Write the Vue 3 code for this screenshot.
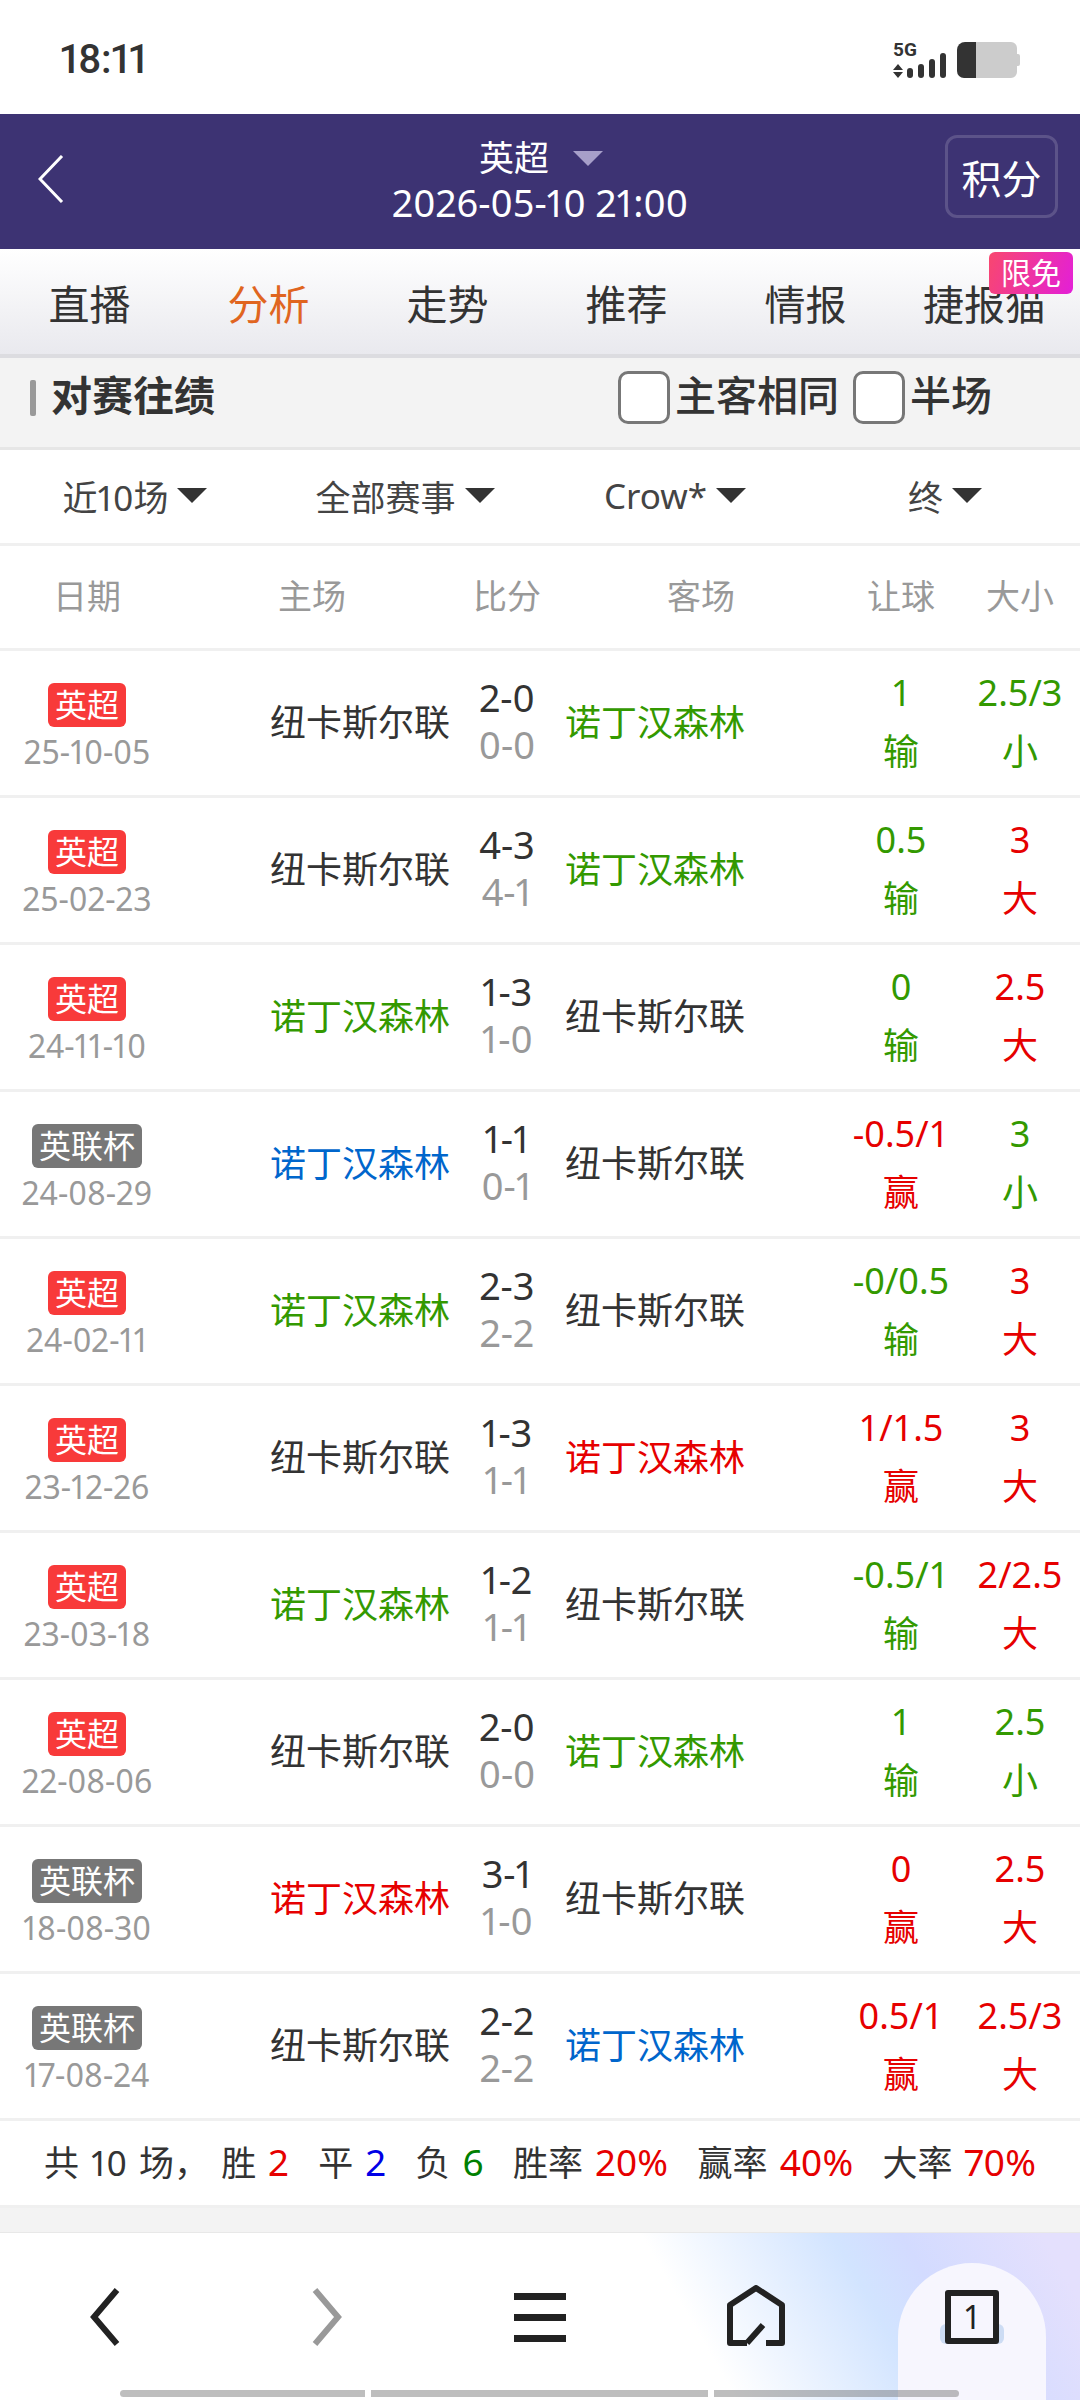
<template>
  <div class="page">
    <!-- status bar -->
    <div class="status">
      <span class="clock">18:11</span>
      <svg class="status-icons" viewBox="0 0 130 38" width="130" height="38">
        <text x="0" y="14" class="five-g">5G</text>
        <path d="M5 22l5 6H0zM5 36l5-6H0z" fill="#333" />
        <rect x="14" y="26" width="6" height="10" rx="3" fill="#333" />
        <rect x="25" y="22" width="6" height="14" rx="3" fill="#333" />
        <rect x="36" y="17" width="6" height="19" rx="3" fill="#333" />
        <rect x="47" y="11" width="6" height="25" rx="3" fill="#333" />
        <path d="M83 0h35a6 6 0 0 1 6 6v6h1a2 2 0 0 1 2 2v8a2 2 0 0 1-2 2h-1v6a6 6 0 0 1-6 6H83z" fill="#ccc" />
        <path d="M83 0v36H71a7 7 0 0 1-7-7V8a8 8 0 0 1 8-8z" fill="#333" />
      </svg>
    </div>

    <!-- match header -->
    <div class="match-head">
      <svg class="back" viewBox="0 0 26 48" width="26" height="48">
        <path d="M24 1L2 24l22 23" fill="none" stroke="#fff" stroke-width="3" />
      </svg>
      <div class="match-info">
        <div class="league">英超<i class="league-arrow"></i></div>
        <div class="kickoff">2026-05-10 21:00</div>
      </div>
      <div class="points-btn">积分</div>
    </div>

    <!-- tabs -->
    <div class="tabs">
      <div v-for="t in tabs" :key="t" class="tab" :class="{ active: t === '分析' }">{{ t }}</div>
      <span class="free-badge">限免</span>
    </div>

    <!-- section title -->
    <div class="section">
      <i class="section-bar"></i>
      <span class="section-title">对赛往绩</span>
      <div class="checks">
        <i class="check"></i><span class="check-label">主客相同</span>
        <i class="check check-second"></i><span class="check-label">半场</span>
      </div>
    </div>

    <!-- filters -->
    <div class="filters">
      <div v-for="f in filters" :key="f" class="filter">{{ f }}<i class="filter-arrow"></i></div>
    </div>

    <!-- table -->
    <div class="grid col-head">
      <span>日期</span><span>主场</span><span>比分</span><span>客场</span><span>让球</span><span>大小</span>
    </div>
    <div v-for="r in rows" :key="r.date" class="grid row">
      <div class="cell-date">
        <span class="tag" :class="{ cup: r.cup }">{{ r.cup ? '英联杯' : '英超' }}</span>
        <span class="date">{{ r.date }}</span>
      </div>
      <div class="team home" :class="r.homeColor">{{ r.home }}</div>
      <div class="score">
        <span>{{ r.ft }}</span>
        <span class="half">{{ r.ht }}</span>
      </div>
      <div class="team away" :class="r.awayColor">{{ r.away }}</div>
      <div class="odds" :class="r.hcColor">
        <span>{{ r.hc }}</span>
        <span>{{ r.hcResult }}</span>
      </div>
      <div class="odds" :class="r.ouColor">
        <span>{{ r.ou }}</span>
        <span>{{ r.ouResult }}</span>
      </div>
    </div>

    <!-- summary -->
    <div class="summary">
      <span>共 10 场， 胜 <b class="red">2</b></span>
      <span>平 <b class="blue">2</b></span>
      <span>负 <b class="dark-green">6</b></span>
      <span>胜率 <b class="red">20%</b></span>
      <span>赢率 <b class="red">40%</b></span>
      <span>大率 <b class="red">70%</b></span>
    </div>
    <div class="spacer"></div>

    <!-- browser nav -->
    <div class="nav">
      <svg viewBox="0 0 32 58" width="32" height="58" class="nav-back">
        <path d="M28 2L5 29l23 27" fill="none" stroke="#222" stroke-width="6" />
      </svg>
      <svg viewBox="0 0 32 58" width="32" height="58" class="nav-fwd">
        <path d="M4 2l23 27L4 56" fill="none" stroke="#999" stroke-width="6" />
      </svg>
      <div class="nav-menu"><i></i><i></i><i></i></div>
      <svg viewBox="0 0 60 62" width="60" height="62" class="nav-home">
        <path d="M21 58H4V20L30 3l26 17v38H40M21 58l16-18" fill="none" stroke="#222" stroke-width="6" stroke-linejoin="round" />
      </svg>
      <div class="nav-arch">
        <i class="tab-glow"></i>
        <div class="tab-count">1</div>
      </div>
      <div class="scrollbar"><i class="seg-a"></i><i class="seg-b"></i><i class="seg-c"></i></div>
    </div>
  </div>
</template>

<script setup>
const tabs = ['直播', '分析', '走势', '推荐', '情报', '捷报猫']
const filters = ['近10场', '全部赛事', 'Crow*', '终']

const NEW = '纽卡斯尔联'
const NOT = '诺丁汉森林'

function row(date, cup, home, homeColor, ft, ht, away, awayColor, hc, hcResult, ou, ouResult) {
  return {
    date, cup, home, homeColor, ft, ht, away, awayColor, hc, hcResult, ou, ouResult,
    hcColor: hcResult === '赢' ? 'red' : 'green',
    ouColor: ouResult === '大' ? 'red' : 'green',
  }
}

const rows = [
  row('25-10-05', false, NEW, '', '2-0', '0-0', NOT, 'green', '1', '输', '2.5/3', '小'),
  row('25-02-23', false, NEW, '', '4-3', '4-1', NOT, 'green', '0.5', '输', '3', '大'),
  row('24-11-10', false, NOT, 'green', '1-3', '1-0', NEW, '', '0', '输', '2.5', '大'),
  row('24-08-29', true, NOT, 'blue', '1-1', '0-1', NEW, '', '-0.5/1', '赢', '3', '小'),
  row('24-02-11', false, NOT, 'green', '2-3', '2-2', NEW, '', '-0/0.5', '输', '3', '大'),
  row('23-12-26', false, NEW, '', '1-3', '1-1', NOT, 'red', '1/1.5', '赢', '3', '大'),
  row('23-03-18', false, NOT, 'green', '1-2', '1-1', NEW, '', '-0.5/1', '输', '2/2.5', '大'),
  row('22-08-06', false, NEW, '', '2-0', '0-0', NOT, 'green', '1', '输', '2.5', '小'),
  row('18-08-30', true, NOT, 'red', '3-1', '1-0', NEW, '', '0', '赢', '2.5', '大'),
  row('17-08-24', true, NEW, '', '2-2', '2-2', NOT, 'blue', '0.5/1', '赢', '2.5/3', '大'),
]
</script>

<style scoped>
.page {
  width: 1080px;
  height: 2400px;
  overflow: hidden;
  background: #fff;
  color: #333;
  font-family: "Noto Sans", "Noto Sans CJK SC", sans-serif;
  font-variant-numeric: proportional-nums;
}

.status {
  height: 114px;
  display: flex;
  align-items: flex-start;
  justify-content: space-between;
  padding: 0 57px 0 60px;
  box-sizing: border-box;
}
.clock {
  font-family: Roboto, sans-serif;
  font-size: 40px;
  font-weight: 500;
  line-height: 47px;
  margin-top: 36px;
  letter-spacing: -0.5px;
}
.status-icons {
  margin-top: 42px;
  margin-left: auto;
  overflow: visible;
}
.five-g {
  font: 700 19px Roboto, sans-serif;
  fill: #333;
}

.match-head {
  height: 135px;
  background: #3d3373;
  position: relative;
  color: #fff;
  display: flex;
  align-items: center;
  justify-content: center;
  padding-bottom: 3px;
  box-sizing: border-box;
}
.back {
  position: absolute;
  left: 38px;
  top: 41px;
}
.match-info {
  text-align: center;
}
.league {
  font-size: 35px;
  line-height: 44px;
  transform: translateX(-26px);
  position: relative;
}
.league-arrow {
  position: absolute;
  left: calc(50% + 59px);
  top: 15px;
  border-left: 15px solid transparent;
  border-right: 15px solid transparent;
  border-top: 15px solid #a79fc9;
}
.kickoff {
  font-size: 38px;
  line-height: 44px;
}
.points-btn {
  position: absolute;
  left: 945px;
  top: 21px;
  width: 113px;
  height: 83px;
  box-sizing: border-box;
  border: 3px solid #5c5389;
  border-radius: 12px;
  font-size: 40px;
  display: flex;
  align-items: center;
  justify-content: center;
}

.tabs {
  height: 109px;
  box-sizing: border-box;
  border-bottom: 4px solid #dcdce0;
  background: linear-gradient(#fff, #e9e9ee);
  display: grid;
  grid-template-columns: repeat(6, 179px);
  position: relative;
  font-size: 41px;
}
.tab {
  display: flex;
  align-items: center;
  justify-content: center;
  white-space: nowrap;
}
.tab.active {
  color: #e0651f;
}
.free-badge {
  position: absolute;
  left: 989px;
  top: 3px;
  width: 84px;
  height: 42px;
  border-radius: 6px;
  background: linear-gradient(110deg, #f8476f, #e31fd8);
  color: #fff;
  font-size: 30px;
  line-height: 42px;
  text-align: center;
}

.section {
  height: 92px;
  box-sizing: border-box;
  border-bottom: 3px solid #e6e6e6;
  background: #f3f3f3;
  display: flex;
  align-items: center;
  padding: 0 0 10px 30px;
}
.section-bar {
  width: 6px;
  height: 36px;
  background: #999;
  margin-right: 15px;
  border-radius: 2px;
}
.section-title {
  font-size: 41px;
  font-weight: 700;
  line-height: 52px;
  margin-bottom: 6px;
}
.checks {
  margin-left: auto;
  margin-right: 88px;
  display: flex;
  align-items: center;
}
.check {
  width: 52px;
  height: 53px;
  box-sizing: border-box;
  background: #fff;
  border: 3px solid #777;
  border-radius: 10px;
  margin-right: 5px;
}
.check-second {
  margin-left: 14px;
}
.check-label {
  font-size: 41px;
  font-weight: 500;
  line-height: 52px;
  margin-bottom: 6px;
}

.filters {
  height: 96px;
  box-sizing: border-box;
  border-bottom: 3px solid #f0f0f0;
  display: grid;
  grid-template-columns: repeat(4, 270px);
  font-size: 35px;
  padding-bottom: 2px;
}
.filter {
  display: flex;
  align-items: center;
  justify-content: center;
  color: #444;
}
.filter-arrow {
  margin-left: 9px;
  border-left: 15px solid transparent;
  border-right: 15px solid transparent;
  border-top: 15px solid #333;
}

.grid {
  display: grid;
  grid-template-columns: 174px 276px 114px 274px 126px 112px;
  box-sizing: border-box;
  border-bottom: 3px solid #f0f0f0;
}
.col-head {
  height: 105px;
  align-items: center;
  text-align: center;
  font-size: 34px;
  color: #999;
  padding-bottom: 6px;
}
.row {
  height: 147px;
  align-items: center;
  text-align: center;
}

.cell-date {
  display: flex;
  flex-direction: column;
  align-items: center;
  margin-top: 8px;
}
.tag {
  height: 44px;
  line-height: 44px;
  padding: 0 7px;
  border-radius: 6px;
  background: #f83a3a;
  color: #fff;
  font-size: 32px;
}
.tag.cup {
  background: #777;
}
.date {
  font-size: 32px;
  line-height: 40px;
  margin-top: 5px;
  color: #999;
}

.team {
  font-size: 36px;
  white-space: nowrap;
  margin-top: -6px;
}
.team.home {
  text-align: right;
}
.team.away {
  text-align: left;
  padding-left: 1px;
}
.score {
  display: flex;
  flex-direction: column;
  font-size: 38px;
  line-height: 47px;
  margin-top: -4px;
}
.half {
  color: #999;
}
.odds {
  display: flex;
  flex-direction: column;
  font-size: 36px;
  font-variant-numeric: tabular-nums;
  line-height: 59px;
  margin-top: -2px;
  white-space: nowrap;
}

.red { color: #e60000; }
.green { color: #339900; }
.blue { color: #0066cc; }
.dark-green { color: #008000; }
.summary .blue { color: #0000e6; }

.summary {
  height: 87px;
  box-sizing: border-box;
  border-bottom: 3px solid #f0f0f0;
  display: flex;
  align-items: center;
  justify-content: space-between;
  padding: 0 44px 4px;
  font-size: 35px;
  white-space: pre;
  word-spacing: 3px;
}
.summary b {
  font-weight: 400;
  font-size: 37px;
}
.spacer {
  height: 24px;
  background: #f3f3f3;
}

.nav {
  height: 168px;
  position: relative;
  border-top: 1px solid #e8e8e8;
  box-sizing: border-box;
  background: linear-gradient(60deg, #fff 638px, #d2e4ff 803px, #d3dbff 863px, #e4e0fd 985px);
}
.nav-back { position: absolute; left: 89px; top: 55px; }
.nav-fwd { position: absolute; left: 311px; top: 55px; }
.nav-home { position: absolute; left: 726px; top: 52px; }
.nav-menu {
  position: absolute;
  left: 514px;
  top: 60px;
  width: 52px;
  display: flex;
  flex-direction: column;
  gap: 14px;
}
.nav-menu i {
  height: 7px;
  background: #222;
}
.nav-arch {
  position: absolute;
  left: 898px;
  top: 30px;
  width: 148px;
  height: 138px;
  border-radius: 74px 74px 0 0;
  background: #f7f6fe;
}
.tab-glow {
  position: absolute;
  left: 42px;
  top: 61px;
  width: 64px;
  height: 20px;
  border-radius: 6px;
  background: #cddcf4;
}
.tab-count {
  position: absolute;
  left: 47px;
  top: 27px;
  width: 54px;
  height: 54px;
  box-sizing: border-box;
  border: 6px solid #222;
  border-radius: 3px;
  background: #f7f6fe;
  color: #222;
  font-size: 32px;
  line-height: 42px;
  text-align: center;
}
.scrollbar {
  position: absolute;
  left: 120px;
  top: 157px;
  display: flex;
  gap: 6px;
}
.scrollbar i {
  height: 7px;
  background: rgba(110, 110, 110, 0.45);
}
.seg-a { width: 245px; border-radius: 4px 0 0 4px; }
.seg-b { width: 337px; }
.seg-c { width: 245px; border-radius: 0 4px 4px 0; }
</style>

<style>
body {
  background: #fff;
}
</style>
